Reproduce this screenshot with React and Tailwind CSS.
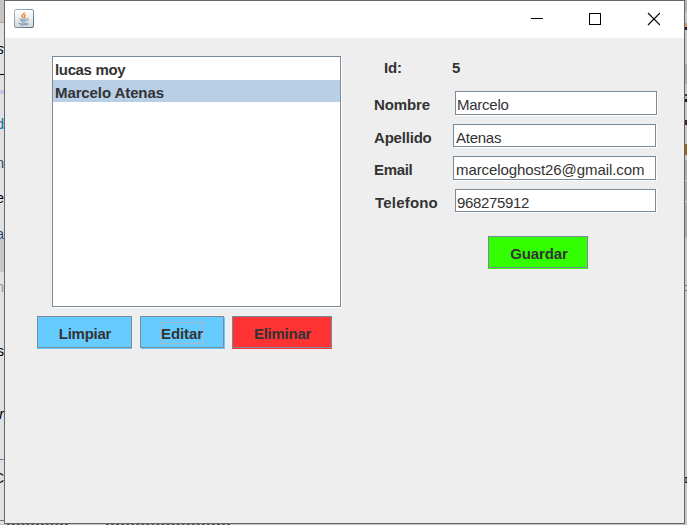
const leftStrip = [
  { h: 'h-[22px]', look: 'bg-[#c4c4c4]' },
  { h: 'h-px', look: 'bg-[#a8a8a8]' },
  { h: 'h-[51px]', look: 'pt-[17px] text-black italic', text: 's' },
  { h: 'h-px', look: 'bg-black' },
  { h: 'h-[15px]', look: '' },
  { h: 'h-[4px]', look: 'bg-[#c4c4e4]' },
  { h: 'h-[48px]', look: 'pt-[21px] text-[#126a9c]', text: 'd' },
  { h: 'h-[44px]', look: 'pt-[12px] text-[#24466c]', text: 'n' },
  { h: 'h-[30px]', look: 'pt-[3px] text-black', text: 'e' },
  { h: 'h-[23px]', look: 'pt-[9px] text-[#24466c]', text: 'a' },
  { h: 'h-[33px]', look: 'bg-[#c5c7c8]' },
  { h: 'h-[48px]', look: 'pt-[6px] text-[#a09088]', text: 'n' },
  { h: 'h-[60px]', look: 'pt-[22px] text-black', text: 's' },
  { h: 'h-[50px]', look: 'pt-[25px] text-black italic', text: 'r' },
  { h: 'h-[30px]', look: 'pt-[16px] text-[#98639b]', text: 'L' },
  { h: 'h-[60px]', look: 'pt-[9px] text-black', text: 'C' },
  { h: 'h-px', look: 'bg-[#777]' },
];

const rightStrip = [
  'h-[12px] bg-[#b5b5b5]',
  'h-[11px]',
  'h-[4px] bg-[#d49a68]',
  'h-[3px] bg-[#241632]',
  'h-[34px]',
  'h-[20px] bg-[#aaa]',
  'h-[10px]',
  'h-[2px] bg-[#403238]',
  'h-[3px] bg-[#c0aaa0]',
  'h-[3px] bg-[#201828]',
  'h-[18px]',
  'h-[5px] bg-[#40291f]',
  'h-[19px]',
  'h-[11px] bg-[#9b641d]',
  'h-[5px]',
  'h-[20px] bg-[#adadad]',
  'h-px bg-[#d4d4d4]',
  'h-[20px] bg-[#adadad]',
  'h-px bg-[#d4d4d4]',
  'h-[36px] bg-[#adadad]',
  'h-[47px]',
  'h-px bg-[#777]',
  'h-[4px]',
  'h-px bg-[#777]',
  'h-[186px]',
  'h-[6px] border-y border-[#222240] bg-[#8a7260]',
];

const fields = [
  { label: 'Nombre', value: 'Marcelo', row: 'h-[33px]', labelLook: 'tracking-[-0.1px]', box: 'w-[202px] h-[24px] mr-[27px]', text: 'pl-px tracking-[-0.25px]' },
  { label: 'Apellido', value: 'Atenas', row: 'h-[32px]', labelLook: 'tracking-[-0.2px]', box: 'w-[203px] h-[23px] mr-[28px]', text: 'pl-[2px] tracking-[-0.25px]' },
  { label: 'Email', value: 'marceloghost26@gmail.com', row: 'h-[33px]', labelLook: 'tracking-[-0.35px]', box: 'w-[203px] h-[24px] mr-[28px]', text: 'pl-[2px] tracking-[-0.08px]' },
  { label: 'Telefono', value: '968275912', row: 'h-[33px]', labelLook: 'pl-px tracking-[0.2px]', box: 'w-[201px] h-[23px] mr-[28px]', text: 'pl-px tracking-[-0.35px]' },
];

function LeftStrip() {
  return (
    <div className="flex w-[4px] flex-col overflow-hidden bg-[#dfe1e2] text-[14px] leading-[18px]">
      {leftStrip.map((band, i) => (
        <div key={i} className={`flex shrink-0 justify-end ${band.h} ${band.look}`}>
          {band.text}
        </div>
      ))}
    </div>
  );
}

function RightStrip() {
  return (
    <div className="flex w-[2px] flex-col overflow-hidden bg-[#c8c8c8]">
      {rightStrip.map((band, i) => (
        <div key={i} className={`shrink-0 ${band}`} />
      ))}
    </div>
  );
}

function JavaIcon() {
  return (
    <svg className="ml-[9px] mt-[8px]" width="20" height="19" viewBox="0 0 20 19" fill="none">
      <defs>
        <linearGradient id="tile" x1="0" y1="0" x2="0" y2="1">
          <stop offset="0" stopColor="#fff" />
          <stop offset="1" stopColor="#d5dadd" />
        </linearGradient>
        <linearGradient id="edge" x1="0" y1="0" x2="1" y2="1">
          <stop offset="0" stopColor="#a9b8c3" />
          <stop offset="1" stopColor="#506f86" />
        </linearGradient>
      </defs>
      <rect x=".5" y=".5" width="19" height="18" rx="1.5" fill="url(#tile)" stroke="url(#edge)" />
      <path d="M10.300 3.500c.5 1.800-3.300 2.300-2.300 3.900L9.300 9M11.600 5.600c-2 1-.2 1.700-1.400 3.200" stroke="#ed7d2b" strokeWidth="1.400" />
      <path d="M5.500 9.700c1 .8 5.500.8 7 0M6.200 11.200c1 .8 4.500.8 6 0M7.200 12.800c1 .6 3.400.6 4.500 0M12.700 9.800c2.500-.7 2.200 1.600-.2 2.200M4.500 13.600c-1 1.700 8.500 1.800 9.700.2M6 15.900c3 .3 6 .1 8.500-.8" stroke="#6a8cab" strokeWidth=".9" />
    </svg>
  );
}

function TitleBar() {
  return (
    <div className="flex h-[37px] items-start bg-white">
      <JavaIcon />
      <svg className="ml-auto mr-[24px] mt-[11px]" width="130" height="14" viewBox="0 0 130 14" fill="none" stroke="#000" shapeRendering="crispEdges">
        <path d="M1 6.5h12M59.500 1.500h11v11h-11z" />
        <path d="M118 1l12 12M130 1l-12 12" strokeWidth="1.100" shapeRendering="auto" />
      </svg>
    </div>
  );
}

function Field({ field }) {
  return (
    <div className={`flex items-start justify-between ${field.row}`}>
      <span className={`whitespace-nowrap pt-[2px] font-bold leading-[23px] ${field.labelLook}`}>{field.label}</span>
      <div className={`border border-[#7a8a99] bg-white shadow-[1px_1px_0_#fff] ${field.box}`}>
        <span className={`block whitespace-nowrap pt-px leading-[23px] ${field.text}`}>{field.value}</span>
      </div>
    </div>
  );
}

function Button({ children, className }) {
  return (
    <button className={`h-[32px] border border-[#7a8a99] pt-[2px] text-center font-bold leading-[23px] ${className}`}>
      {children}
    </button>
  );
}

export default function App() {
  return (
    <div className="flex h-[525px] w-[687px] flex-col overflow-hidden font-['Liberation_Sans',Arial,sans-serif] text-[15px] text-[#333]">
      <div className="flex h-[524px]">
        <LeftStrip />
        <div className="w-[681px] border border-[#666] bg-[#eee]">
          <TitleBar />
          <div className="flex pt-[18px]">
            <div className="flex w-[369px] flex-col gap-[9px] pl-[32px]">
              <div className="ml-[15px] h-[251px] w-[289px] border border-[#7a8a99] bg-white font-bold shadow-[1px_1px_0_#fff]">
                <div className="h-[23px] pl-[2px] pt-px leading-[23px] tracking-[-0.35px]">lucas moy</div>
                <div className="h-[22px] bg-[#b8cfe5] pl-[2px] pt-px leading-[23px] tracking-[-0.1px]">Marcelo Atenas</div>
              </div>
              <div className="flex gap-[8px]">
                <Button className="w-[95px] bg-[#66ccff] pl-px tracking-[-0.25px] shadow-[0_1px_0_#66ccff]">Limpiar</Button>
                <Button className="w-[84px] bg-[#66ccff] tracking-[-0.1px] shadow-[1px_1px_0_#66ccff]">
                  <span className="inline-block h-[22px] border border-[#a3b8cc] leading-[21px]">Editar</span>
                </Button>
                <Button className="w-[100px] bg-[#ff3333] pl-px tracking-[-0.25px] shadow-[0_1px_0_#ff3333]">Eliminar</Button>
              </div>
            </div>
            <div className="w-[310px]">
              <div className="flex h-[35px] pl-[10px] font-bold leading-[23px]">
                <span className="w-[68px] tracking-[-0.2px]">Id:</span>
                <span>5</span>
              </div>
              {fields.map((field) => (
                <Field key={field.label} field={field} />
              ))}
              <div className="pl-[114px] pt-[14px]">
                <Button className="w-[100px] bg-[#33ff00] pl-[2px] tracking-[-0.1px] shadow-[0_1px_0_#33ff00]">Guardar</Button>
              </div>
            </div>
          </div>
        </div>
        <RightStrip />
      </div>
      <div className="flex h-px gap-[38px] bg-[#c4c4c4] pl-[7px]">
        <div className="w-[61px] border-t border-dashed border-[#555]" />
        <div className="w-[124px] border-t border-dashed border-[#555]" />
      </div>
    </div>
  );
}
